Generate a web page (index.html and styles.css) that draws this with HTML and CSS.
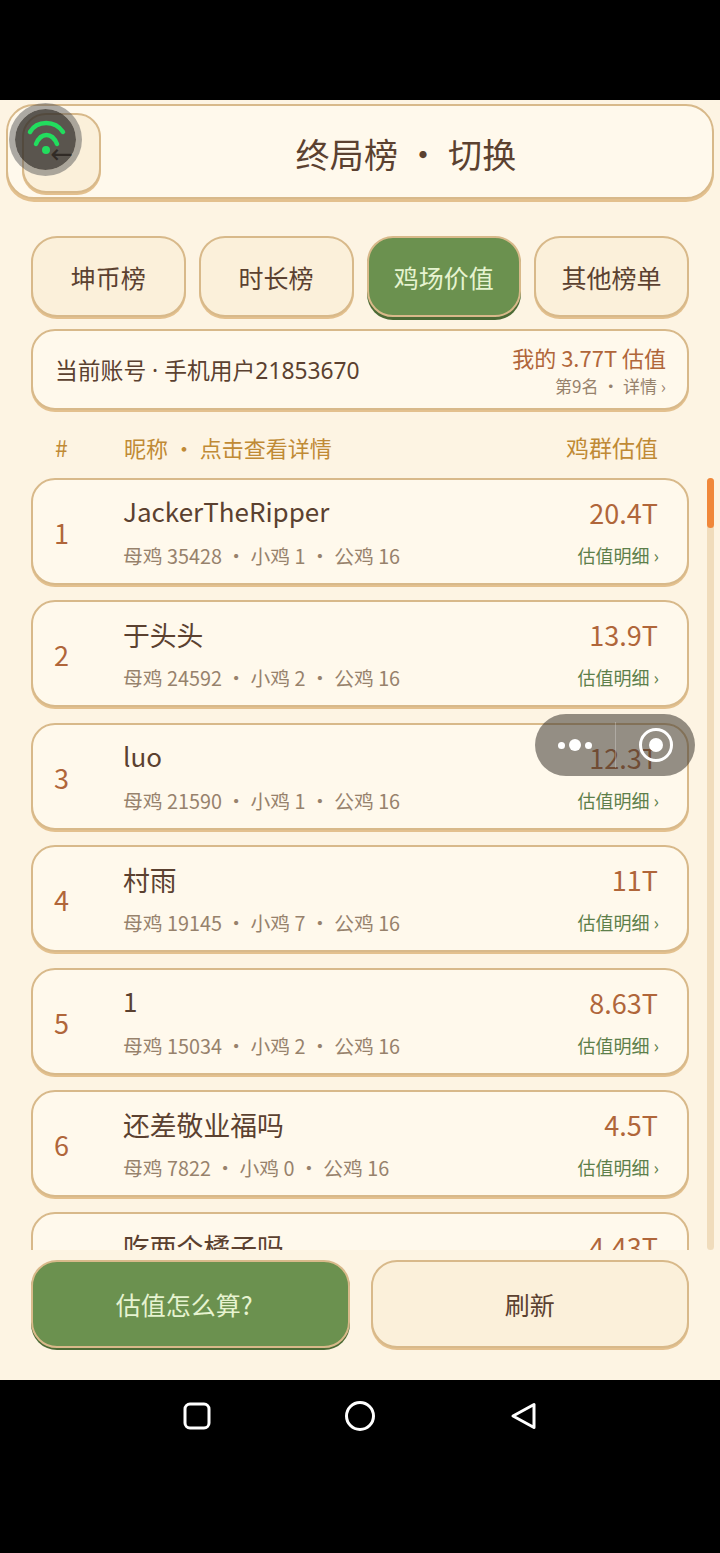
FILE: index.html
```html
<!DOCTYPE html>
<html lang="zh-CN">
<head>
  <meta charset="UTF-8" />
  <title>终局榜</title>
  <meta name="viewport" content="width=device-width, initial-scale=1.0">
  <link rel="stylesheet" href="styles.css">
</head>
<body>
  <div class="top-black"></div>
  <div class="app">
    <div class="header">
      <div class="back">←</div>
      <div class="title">终局榜 · 切换</div>
    </div>

    <div class="tabs">
      <div class="tab">坤币榜</div>
      <div class="tab">时长榜</div>
      <div class="tab active">鸡场价值</div>
      <div class="tab">其他榜单</div>
    </div>

    <div class="account">
      <div class="account-name">当前账号 · 手机用户21853670</div>
      <div class="account-right">
        <div class="my-value">我的 3.77T 估值</div>
        <div class="my-rank">第9名 · 详情 ›</div>
      </div>
    </div>

    <div class="list-head">
      <div class="col-rank">#</div>
      <div class="col-name">昵称 · 点击查看详情</div>
      <div class="col-value">鸡群估值</div>
    </div>

    <div class="list-wrap">
      <div class="list">
        <div class="row">
          <div class="rank">1</div>
          <div class="info">
            <div class="name">JackerTheRipper</div>
            <div class="stats">母鸡 35428 · 小鸡 1 · 公鸡 16</div>
          </div>
          <div class="right">
            <div class="value">20.4T</div>
            <div class="detail">估值明细 ›</div>
          </div>
        </div>
        <div class="row">
          <div class="rank">2</div>
          <div class="info">
            <div class="name cn">于头头</div>
            <div class="stats">母鸡 24592 · 小鸡 2 · 公鸡 16</div>
          </div>
          <div class="right">
            <div class="value">13.9T</div>
            <div class="detail">估值明细 ›</div>
          </div>
        </div>
        <div class="row">
          <div class="rank">3</div>
          <div class="info">
            <div class="name">luo</div>
            <div class="stats">母鸡 21590 · 小鸡 1 · 公鸡 16</div>
          </div>
          <div class="right">
            <div class="value">12.3T</div>
            <div class="detail">估值明细 ›</div>
          </div>
        </div>
        <div class="row">
          <div class="rank">4</div>
          <div class="info">
            <div class="name cn">村雨</div>
            <div class="stats">母鸡 19145 · 小鸡 7 · 公鸡 16</div>
          </div>
          <div class="right">
            <div class="value">11T</div>
            <div class="detail">估值明细 ›</div>
          </div>
        </div>
        <div class="row">
          <div class="rank">5</div>
          <div class="info">
            <div class="name">1</div>
            <div class="stats">母鸡 15034 · 小鸡 2 · 公鸡 16</div>
          </div>
          <div class="right">
            <div class="value">8.63T</div>
            <div class="detail">估值明细 ›</div>
          </div>
        </div>
        <div class="row">
          <div class="rank">6</div>
          <div class="info">
            <div class="name cn">还差敬业福吗</div>
            <div class="stats">母鸡 7822 · 小鸡 0 · 公鸡 16</div>
          </div>
          <div class="right">
            <div class="value">4.5T</div>
            <div class="detail">估值明细 ›</div>
          </div>
        </div>
        <div class="row">
          <div class="rank"></div>
          <div class="info">
            <div class="name cn">吃两个橘子吗</div>
          </div>
          <div class="right">
            <div class="value">4.43T</div>
          </div>
        </div>
      </div>
      <div class="scroll-track"><div class="scroll-thumb"></div></div>
    </div>

    <div class="footer">
      <div class="foot-btn green">估值怎么算?</div>
      <div class="foot-btn">刷新</div>
    </div>

    <!-- 悬浮按钮 -->
    <div class="float-wifi">
      <svg width="50" height="50" viewBox="0 0 50 50" fill="none" stroke="#22dd5e" stroke-width="4.5" stroke-linecap="round">
        <path d="M9 17 C16 5 34 5 42 17" />
        <path d="M15 29 C20 17 31 17 36 29" />
        <circle cx="25" cy="35" r="4" fill="#22dd5e" stroke="none" />
      </svg>
    </div>
    <div class="capsule">
      <div class="dots"><span></span><span class="big"></span><span></span></div>
      <div class="capsule-line"></div>
      <div class="target"><span></span></div>
    </div>
  </div>

  <div class="navbar">
    <svg width="28" height="28" viewBox="0 0 28 28" fill="none" stroke="#fff" stroke-width="3">
      <rect x="2" y="2" width="24" height="24" rx="5" />
    </svg>
    <svg width="32" height="32" viewBox="0 0 32 32" fill="none" stroke="#fff" stroke-width="3">
      <circle cx="16" cy="16" r="13.5" />
    </svg>
    <svg width="28" height="28" viewBox="0 0 28 28" fill="none" stroke="#fff" stroke-width="3" stroke-linejoin="round">
      <path d="M3 14 L24 2.5 V25.5 Z" />
    </svg>
  </div>
</body>
</html>
```

FILE: styles.css
```css
* {
  box-sizing: border-box;
}
html, body {
  margin: 0;
  padding: 0;
}
body {
  width: 720px;
  height: 1553px;
  background: #000;
  font-family: "Noto Sans CJK SC", "Noto Sans", sans-serif;
  color: #5b4130;
  overflow: hidden;
}
.top-black {
  height: 100px;
}
.app {
  position: relative;
  height: 1280px;
  background: #fdf4e3;
  padding-top: 4px;
  overflow: hidden;
}

/* 顶部 */
.header {
  display: flex;
  align-items: center;
  height: 95px;
  margin: 0 6px;
  padding: 0 14px;
  background: #fff9ec;
  border: 2px solid #d8b98a;
  border-radius: 28px;
  box-shadow: 0 3px 0 #e3c08e;
}
.back {
  flex: none;
  width: 79px;
  height: 80px;
  margin-top: 3px;
  display: flex;
  align-items: center;
  justify-content: center;
  font-family: "DejaVu Sans", sans-serif;
  font-size: 27px;
  color: #2e2118;
  background: #fbf0da;
  border: 2px solid #d8b98a;
  border-radius: 24px;
  box-shadow: 0 2px 0 #e3c08e;
}
.title {
  flex: 1;
  padding: 4px 0 0 13px;
  text-align: center;
  font-size: 34px;
  line-height: 48px;
  letter-spacing: 0.2px;
}

/* 标签 */
.tabs {
  display: flex;
  gap: 13px;
  margin: 37px 31px 0;
}
.tab {
  flex: 1;
  height: 81px;
  display: flex;
  align-items: center;
  justify-content: center;
  font-size: 25px;
  background: #fbf0da;
  border: 2px solid #d8b98a;
  border-radius: 26px;
  box-shadow: 0 2px 0 #e3c08e;
}
.tab.active {
  background: #6b914f;
  color: #e6f3d0;
  box-shadow: 0 3px 0 #4c6b36;
}

/* 账号 */
.account {
  display: flex;
  align-items: center;
  justify-content: space-between;
  height: 81px;
  margin: 12px 31px 0;
  padding: 0 21px 0 22px;
  background: #fff9ec;
  border: 2px solid #d8b98a;
  border-radius: 24px;
  box-shadow: 0 2px 0 #e3c08e;
}
.account-name {
  font-family: "Noto Sans", "Noto Sans CJK SC", sans-serif;
  font-size: 22.8px;
}
.account-right {
  padding-top: 2px;
  text-align: right;
}
.my-value {
  font-size: 22px;
  line-height: 31px;
  color: #b0663a;
}
.my-rank {
  font-size: 17px;
  line-height: 26px;
  color: #97826c;
}

/* 表头 */
.list-head {
  display: flex;
  align-items: center;
  height: 68px;
  padding: 6px 62px 0 55px;
  font-size: 23px;
  color: #c08a35;
}
.col-rank {
  width: 69px;
}
.col-name {
  flex: 1;
  font-size: 22px;
}

/* 列表 */
.list-wrap {
  position: relative;
  height: 772px;
  overflow: hidden;
}
.list {
  display: flex;
  flex-direction: column;
  gap: 15.4px;
  padding: 0 31px;
}
.row {
  flex: none;
  display: flex;
  height: 107px;
  padding: 0 29px 0 21px;
  background: #fff9ec;
  border: 2px solid #d8b98a;
  border-radius: 24px;
  box-shadow: 0 2px 0 #e3c08e;
}
.rank {
  width: 69px;
  padding-top: 33px;
  font-size: 27px;
  line-height: 40px;
  color: #b0663a;
}
.info {
  flex: 1;
}
.name {
  height: 40px;
  margin-top: 10px;
  font-size: 26px;
  line-height: 42px;
}
.name.cn {
  font-size: 26.8px;
  line-height: 46px;
}
.stats {
  margin-top: 11px;
  font-size: 19.8px;
  line-height: 30px;
  color: #97826c;
}
.right {
  text-align: right;
}
.value {
  margin-top: 13px;
  font-size: 27px;
  line-height: 40px;
  color: #b0663a;
}
.detail {
  margin-top: 7px;
  margin-right: -1px;
  font-size: 18px;
  line-height: 30px;
  color: #5d7f4a;
}
.scroll-track {
  position: absolute;
  top: 0;
  right: 6px;
  bottom: 0;
  width: 7px;
  background: #f0dcbc;
  border-radius: 4px;
}
.scroll-thumb {
  height: 50px;
  background: #f0873a;
  border-radius: 4px;
}

/* 底部 */
.footer {
  display: grid;
  grid-template-columns: 1fr 1fr;
  gap: 21px;
  margin: 10px 31px 0;
}
.foot-btn {
  height: 88px;
  display: flex;
  align-items: center;
  justify-content: center;
  font-size: 25px;
  background: #fbf0da;
  border: 2px solid #d8b98a;
  border-radius: 26px;
  box-shadow: 0 2px 0 #e3c08e;
}
.foot-btn.green {
  padding-right: 12px;
  background: #6b914f;
  color: #e6f3d0;
  box-shadow: 0 2px 0 #4c6b36;
}

/* 悬浮层 */
.float-wifi {
  position: absolute;
  left: 9px;
  top: 3px;
  width: 73px;
  height: 73px;
  display: flex;
  align-items: center;
  justify-content: center;
  background: rgba(50, 46, 42, 0.8);
  background-clip: padding-box;
  border: 6px solid rgba(90, 90, 90, 0.5);
  border-radius: 50%;
}
.capsule {
  position: absolute;
  left: 535px;
  top: 614px;
  width: 160px;
  height: 62px;
  display: flex;
  align-items: center;
  background: rgba(60, 55, 48, 0.55);
  border-radius: 31px;
}
.dots {
  width: 80px;
  display: flex;
  align-items: center;
  justify-content: center;
  gap: 4px;
}
.dots span {
  width: 7px;
  height: 7px;
  background: #fff;
  border-radius: 50%;
}
.dots .big {
  width: 12px;
  height: 12px;
}
.capsule-line {
  width: 1px;
  height: 46px;
  background: rgba(255, 255, 255, 0.25);
}
.target {
  width: 34px;
  height: 34px;
  margin-left: 23px;
  display: flex;
  align-items: center;
  justify-content: center;
  border: 3px solid #fff;
  border-radius: 50%;
}
.target span {
  width: 14px;
  height: 14px;
  background: #fff;
  border-radius: 50%;
}

/* 系统导航 */
.navbar {
  display: flex;
  align-items: center;
  justify-content: center;
  gap: 133.5px;
  height: 72px;
}
```
